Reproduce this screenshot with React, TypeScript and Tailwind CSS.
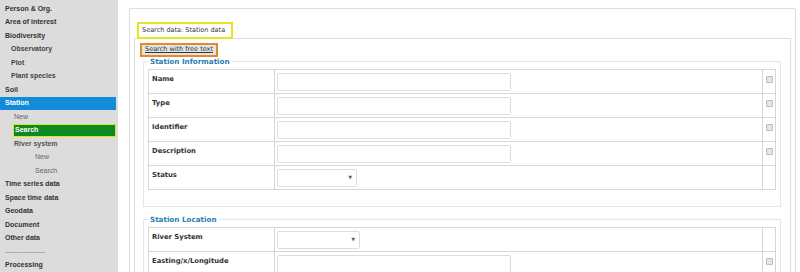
import React from "react";

type NavItem = { label: string; indent: string; tone: string; active?: "blue" | "green" };

const nav: NavItem[] = [
  { label: "Person & Org.", indent: "pl-[5px]", tone: "font-bold text-[#333]" },
  { label: "Area of interest", indent: "pl-[5px]", tone: "font-bold text-[#333]" },
  { label: "Biodiversity", indent: "pl-[5px]", tone: "font-bold text-[#333]" },
  { label: "Observatory", indent: "pl-[11px]", tone: "font-bold text-[#444]" },
  { label: "Plot", indent: "pl-[11px]", tone: "font-bold text-[#444]" },
  { label: "Plant species", indent: "pl-[11px]", tone: "font-bold text-[#444]" },
  { label: "Soil", indent: "pl-[5px]", tone: "font-bold text-[#333]" },
  { label: "Station", indent: "pl-[5px]", tone: "font-bold text-white", active: "blue" },
  { label: "New", indent: "pl-[14px]", tone: "text-[#666]" },
  { label: "Search", indent: "pl-[14px]", tone: "font-bold text-white", active: "green" },
  { label: "River system", indent: "pl-[14px]", tone: "font-bold text-[#555]" },
  { label: "New", indent: "pl-[35px]", tone: "text-[#666]" },
  { label: "Search", indent: "pl-[35px]", tone: "text-[#666]" },
  { label: "Time series data", indent: "pl-[5px]", tone: "font-bold text-[#333]" },
  { label: "Space time data", indent: "pl-[5px]", tone: "font-bold text-[#333]" },
  { label: "Geodata", indent: "pl-[5px]", tone: "font-bold text-[#333]" },
  { label: "Document", indent: "pl-[5px]", tone: "font-bold text-[#333]" },
  { label: "Other data", indent: "pl-[5px]", tone: "font-bold text-[#333]" },
  { label: "-----------------", indent: "pl-[5px]", tone: "text-[#777]" },
  { label: "Processing", indent: "pl-[5px]", tone: "font-bold text-[#333]" },
];

function Sidebar() {
  return (
    <div className="w-[118px] shrink-0 bg-[#dcdcdc] pt-[2px] pr-[2px] font-['Liberation_Sans',Arial,sans-serif] text-[7px]">
      {nav.map((item, i) => {
        if (item.active === "blue") {
          return (
            <div key={i} className={`flex h-[13.5px] items-center bg-[#138bd8] ${item.indent} ${item.tone}`}>
              {item.label}
            </div>
          );
        }
        if (item.active === "green") {
          return (
            <div key={i} className="flex h-[13.5px] pl-[13px]">
              <div className="flex flex-1 items-center border-[1.5px] border-[#e2e21c] bg-[#0c8a22] pl-[1px] font-bold text-white">
                {item.label}
              </div>
            </div>
          );
        }
        return (
          <div key={i} className={`flex h-[13.5px] items-center whitespace-nowrap ${item.indent} ${item.tone}`}>
            {item.label}
          </div>
        );
      })}
    </div>
  );
}

type Row = { label: string; kind: "text" | "select"; check: boolean; selectW?: string };

function Checkbox() {
  return <div className="mx-auto mt-[6px] h-[7px] w-[7px] rounded-[1px] border border-[#bcbcbc] bg-[#e6e6e6]" />;
}

function FormTable({ rows }: { rows: Row[] }) {
  return (
    <div className="border-l border-t border-[#d6d6d6]">
      {rows.map((r) => (
        <div key={r.label} className="flex h-[24px] border-b border-[#d6d6d6]">
          <div className="w-[126px] shrink-0 border-r border-[#d6d6d6] pl-[3px] pt-[4px] text-[6.8px] font-bold text-[#333]">
            {r.label}
          </div>
          <div className="w-[488px] shrink-0 border-r border-[#d6d6d6] pl-[2px] pt-[3px]">
            {r.kind === "text" ? (
              <div className="h-[18px] w-[234px] rounded-[2px] border border-[#dcdcdc] bg-white" />
            ) : (
              <div className={`flex h-[18px] ${r.selectW} items-center justify-end rounded-[2px] border border-[#dcdcdc] bg-white pr-[4px] text-[5px] text-[#666]`}>
                ▼
              </div>
            )}
          </div>
          <div className="flex-1 border-r border-[#d6d6d6]">{r.check && <Checkbox />}</div>
        </div>
      ))}
    </div>
  );
}

function Section({ title, rows }: { title: string; rows: Row[] }) {
  return (
    <fieldset className="ml-[8px] mr-[9px] border border-[#e6e6e6] px-[4px] pb-[16px]">
      <legend className="px-[2px] text-[7.2px] font-bold leading-[9px] text-[#2a7db6]">{title}</legend>
      <div className="pt-[3px]">
        <FormTable rows={rows} />
      </div>
    </fieldset>
  );
}

const info: Row[] = [
  { label: "Name", kind: "text", check: true },
  { label: "Type", kind: "text", check: true },
  { label: "Identifier", kind: "text", check: true },
  { label: "Description", kind: "text", check: true },
  { label: "Status", kind: "select", check: false, selectW: "w-[80px]" },
];

const location: Row[] = [
  { label: "River System", kind: "select", check: false, selectW: "w-[83px]" },
  { label: "Easting/x/Longitude", kind: "text", check: true },
];

export default function App() {
  return (
    <div className="flex h-[272px] w-[800px] overflow-hidden bg-white font-['DejaVu_Sans',Verdana,sans-serif]">
      <Sidebar />
      <div className="flex-1 pl-[11px] pr-[4px] pt-[8px]">
        <div className="h-[300px] rounded-tr-[2px] border border-[#dddddd] px-[4px] pt-[13px]">
          {/* tab header */}
          <div className="relative z-10 -mb-px flex pl-[3px]">
            <div className="flex h-[17px] items-center border-2 border-[#e6e61e] bg-white pl-[3px] pr-[6px] text-[6.5px] text-[#333]">
              Search data: Station data
            </div>
          </div>
          <div className="h-[260px] border border-[#dddddd] pt-[4px]">
            <div className="ml-[5px] flex">
              <div className="flex h-[14px] items-center border-2 border-[#e38b2c] bg-[#e4e4e4] px-[3px] text-[6.5px] text-[#333] underline">
                Search with free text
              </div>
            </div>
            <Section title="Station Information" rows={info} />
            <div className="h-[8px]" />
            <Section title="Station Location" rows={location} />
          </div>
        </div>
      </div>
    </div>
  );
}
